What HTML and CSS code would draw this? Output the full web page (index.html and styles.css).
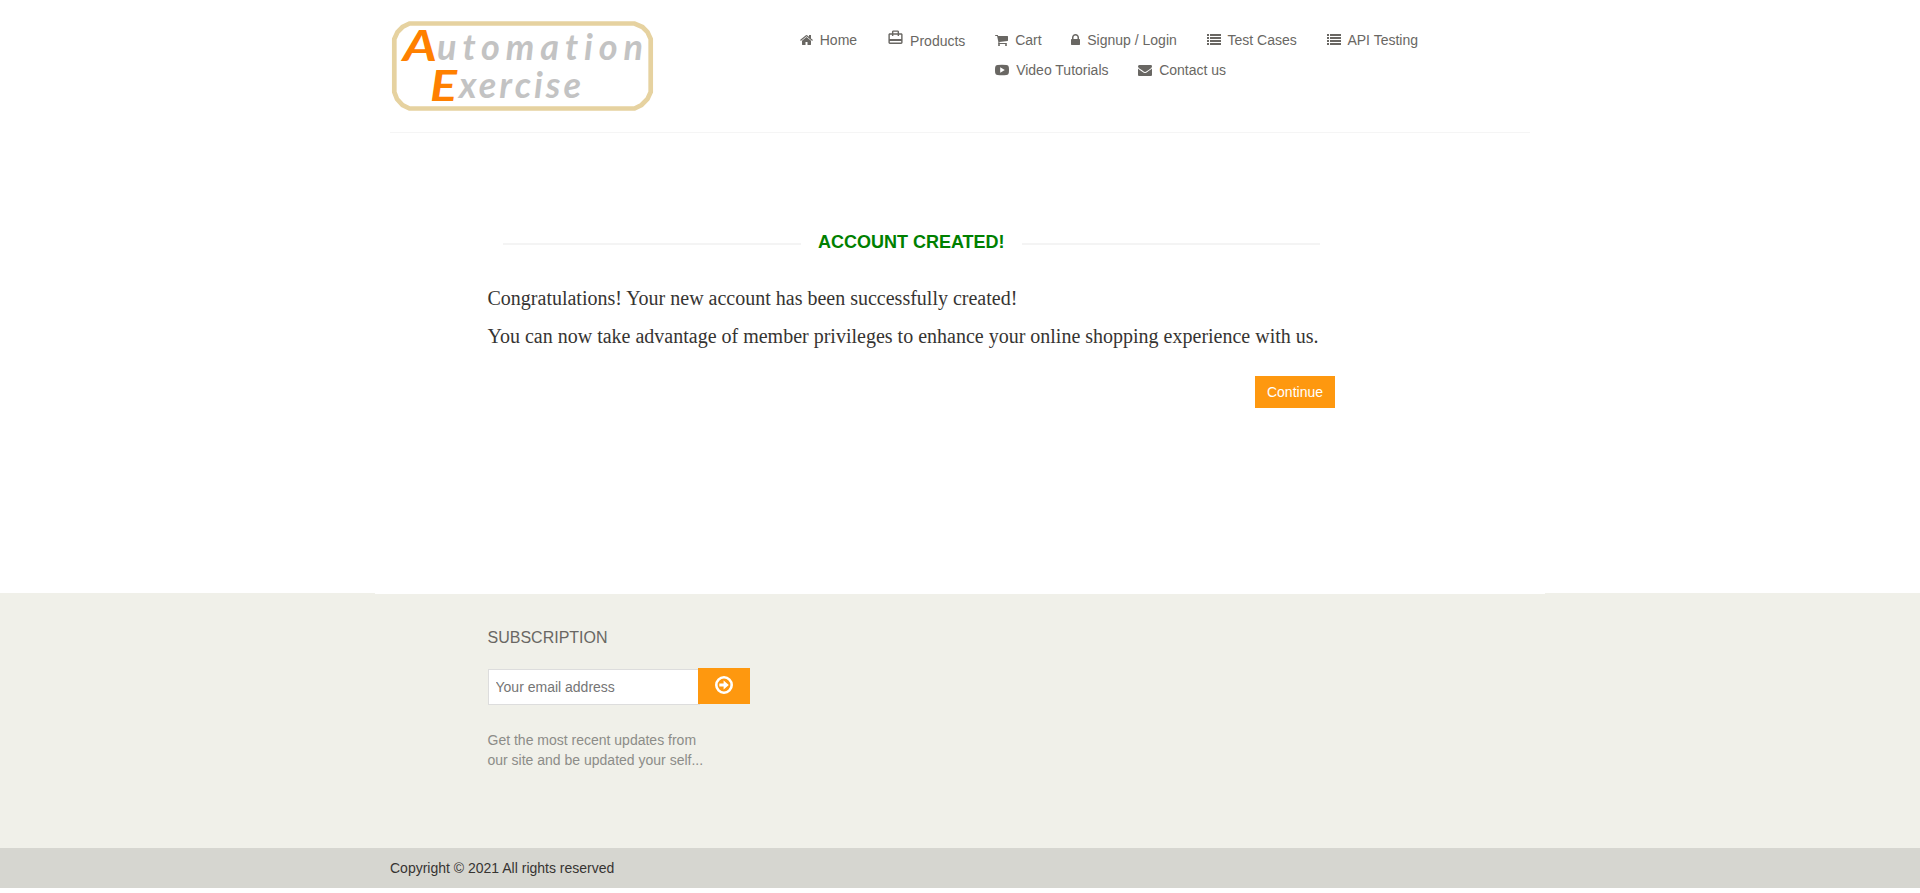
FILE: index.html
```html
<!DOCTYPE html>
<html lang="en">
<head>
<meta charset="utf-8">
<title>Automation Exercise - Account Created</title>
<link rel="stylesheet" href="styles.css">
</head>
<body>
<header class="container header">
  <div class="header-inner">
    <a class="logo">
      <svg width="263" height="90" viewBox="0 0 263 90">
        <path class="logo-frame" d="M18.500 2.500H243.500L251.500 6L256.500 11L259.700 18V71L256.500 78L250.500 84L243.500 87.500H18.500L11.500 84L6 78L3.300 71V18L6.500 11L11.500 6Z"/>
        <g class="logo-text">
          <text class="cap" x="12" y="40" textLength="34" lengthAdjust="spacingAndGlyphs">A</text>
          <text x="46" y="39" textLength="206">utomation</text>
          <text class="cap" x="39" y="80" textLength="27" lengthAdjust="spacingAndGlyphs">E</text>
          <text x="68" y="77" textLength="122">xercise</text>
        </g>
      </svg>
    </a>
    <nav class="nav">
      <a class="nav-item"><svg width="13" height="14" viewBox="64 0 1664 1792"><path d="M1472 992v480q0 26-19 45t-45 19h-384v-384h-256v384h-384q-26 0-45-19t-19-45v-480q0-1 .5-3t.5-3l575-474 575 474q1 2 1 6zm223-69l-62 74q-8 9-21 11h-3q-13 0-21-7l-692-577-692 577q-12 8-24 7-13-2-21-11l-62-74q-8-10-7-23.500t11-21.500l719-599q32-26 76-26t76 26l244 204v-195q0-14 9-23t23-9h192q14 0 23 9t9 23v408l219 182q10 8 11 21.500t-7 23.500z"/></svg>Home</a>
      <a class="nav-item nav-products"><svg width="17" height="17" viewBox="0 0 24 24"><path d="M20 6h-3V4c0-1.110-.89-2-2-2H9c-1.110 0-2 .89-2 2v2H4c-1.110 0-2 .89-2 2v11c0 1.110.89 2 2 2h16c1.110 0 2-.89 2-2V8c0-1.110-.89-2-2-2zM9 4h6v2H9V4zm11 15H4v-2h16v2zm0-5H4V8h3v2h2V8h6v2h2V8h3v6z"/></svg>Products</a>
      <div class="nav-group">
        <div class="nav-row">
          <a class="nav-item"><svg width="13" height="14" viewBox="64 0 1664 1792"><path d="M704 1536q0 52-38 90t-90 38-90-38-38-90 38-90 90-38 90 38 38 90zm896 0q0 52-38 90t-90 38-90-38-38-90 38-90 90-38 90 38 38 90zm128-1088v512q0 24-16.500 42.500t-40.500 21.500l-1044 122q13 60 13 70 0 16-24 64h920q26 0 45 19t19 45-19 45-45 19h-1024q-26 0-45-19t-19-45q0-11 8-31.500t16-36 21.500-40 15.500-29.500l-177-823h-204q-26 0-45-19t-19-45 19-45 45-19h256q16 0 28.500 6.500t19.500 15.500 13 24.500 8 26 5.500 29.500 4.500 26h1201q26 0 45 19t19 45z"/></svg>Cart</a>
          <a class="nav-item"><svg width="9" height="14" viewBox="320 0 1152 1792"><path d="M640 768h512v-192q0-106-75-181t-181-75-181 75-75 181v192zm832 96v576q0 40-28 68t-68 28h-960q-40 0-68-28t-28-68v-576q0-40 28-68t68-28h32v-192q0-184 132-316t316-132 316 132 132 316v192h32q40 0 68 28t28 68z"/></svg>Signup / Login</a>
          <a class="nav-item"><svg width="14" height="14" viewBox="0 0 14 14"><path d="M0 1h2v2H0zM3 1h11v2H3zM0 4h2v2H0zM3 4h11v2H3zM0 7h2v2H0zM3 7h11v2H3zM0 10h2v2H0zM3 10h11v2H3z"/></svg>Test Cases</a>
          <a class="nav-item"><svg width="14" height="14" viewBox="0 0 14 14"><path d="M0 1h2v2H0zM3 1h11v2H3zM0 4h2v2H0zM3 4h11v2H3zM0 7h2v2H0zM3 7h11v2H3zM0 10h2v2H0zM3 10h11v2H3z"/></svg>API Testing</a>
        </div>
        <div class="nav-row">
          <a class="nav-item"><svg width="14" height="14" viewBox="0 0 14 14"><path fill-rule="evenodd" d="M2.500 2Q7 1.600 11.500 2Q13.500 2.100 13.800 4Q14.200 7 13.800 10Q13.500 11.800 11.500 12Q7 12.400 2.500 12Q.5 11.800 .2 10Q-.2 7 .2 4Q.5 2.100 2.500 2ZM5.200 4.200V9.800L9.800 7Z"/></svg>Video Tutorials</a>
          <a class="nav-item"><svg width="14" height="14" viewBox="0 0 1792 1792"><path d="M1792 710v794q0 66-47 113t-113 47h-1472q-66 0-113-47t-47-113v-794q44 49 101 87 362 246 497 345 57 42 92.500 65.500t94.500 48 110 24.500h2q51 0 110-24.500t94.500-48 92.500-65.500q170-123 498-345 57-39 100-87zm0-294q0 79-49 151t-122 123q-376 261-468 325-10 7-42.500 31t-54 38.500-52 32.500-57.500 27-50 9h-2q-23 0-50-9t-57.500-27-52-32.500-54-38.500-42.500-31q-91-64-262-182.500t-205-142.500q-62-42-117-115.500t-55-136.500q0-78 41.500-130t118.500-52h1472q65 0 112.500 47t47.500 113z"/></svg>Contact us</a>
        </div>
      </div>
    </nav>
  </div>
</header>

<main class="container main">
  <section class="account">
    <h2 class="title">Account Created!</h2>
    <p class="message">Congratulations! Your new account has been successfully created!</p>
    <p class="message">You can now take advantage of member privileges to enhance your online shopping experience with us.</p>
    <div class="actions"><a class="continue">Continue</a></div>
  </section>
</main>

<footer class="footer">
  <div class="container footer-cap"></div>
  <div class="container">
    <div class="subscribe">
      <h2 class="subscribe-title">Subscription</h2>
      <form class="subscribe-form">
        <input class="subscribe-input" type="email" placeholder="Your email address">
        <button class="subscribe-button" type="button" aria-label="Subscribe">
          <svg width="18" height="18" viewBox="0 0 18 18"><circle cx="9" cy="9" r="7.700" fill="none" stroke="currentColor" stroke-width="2.600"/><path d="M4.300 7.400H8.600V4.400L13.800 9L8.600 13.600V10.600H4.300Z"/></svg>
        </button>
      </form>
      <p class="subscribe-note">Get the most recent updates from<br>our site and be updated your self...</p>
    </div>
  </div>
  <div class="footer-bottom">
    <div class="container"><p class="copyright">Copyright © 2021 All rights reserved</p></div>
  </div>
</footer>
</body>
</html>
```

FILE: styles.css
```css
* { box-sizing: border-box; }

body {
  margin: 0;
  background: #fff;
  color: #363432;
  font: 14px/20px "Liberation Sans", Arial, sans-serif;
}

h2, p { margin: 0; }
svg { display: block; fill: currentColor; flex: none; }

.container {
  width: 1170px;
  margin: 0 auto;
  padding: 0 15px;
}

/* Header */
.header-inner {
  display: flex;
  justify-content: space-between;
  height: 133px;
  padding: 21px 112px 0 1px;
  border-bottom: 1px solid #f5f5f5;
}

.logo-frame { fill: #fff; stroke: #e6d2a0; stroke-width: 4.700; }
.logo-text {
  font: italic 700 36px "Lato", sans-serif;
  font-variant-ligatures: none;
  fill: #c3c3c3;
}
.logo-text .cap { font-size: 42px; fill: #ff8000; }

.nav {
  display: flex;
  align-items: flex-start;
  gap: 30px;
  padding-top: 9px;
  color: #696763;
}
.nav-group { display: flex; flex-direction: column; gap: 10px; }
.nav-row { display: flex; gap: 29.900px; }
.nav-item {
  display: flex;
  align-items: center;
  gap: 6.800px;
  white-space: nowrap;
}
.nav-products { gap: 6px; padding-top: 1px; }
.nav-products svg { margin-top: -7px; }

/* Confirmation */
.main { height: 460px; }
.account {
  width: 847.500px;
  margin-left: 97.500px;
  padding-top: 99px;
}
.title {
  display: flex;
  align-items: center;
  gap: 17px;
  margin: 0 15px 32px;
  color: green;
  font-size: 18px;
  line-height: 20px;
  text-transform: uppercase;
}
.title::before,
.title::after {
  content: "";
  flex: 1;
  height: 2px;
  margin-top: 4px;
  background: #f4f4f4;
}
.message {
  margin-bottom: 10px;
  font: 20px/28px "Liberation Serif", "Times New Roman", serif;
  white-space: nowrap;
}
.actions { display: flex; justify-content: flex-end; padding-top: 16px; }
.continue {
  padding: 6px 12px;
  background: #fe980f;
  color: #fff;
}

/* Footer */
.footer { background: #f0f0e9; }
.footer-cap { height: 1px; background: #fff; }
.subscribe {
  height: 254px;
  margin-left: 97.500px;
  padding-top: 34px;
}
.subscribe-title {
  margin-bottom: 20px;
  color: #696763;
  font-size: 16px;
  font-weight: 400;
  text-transform: uppercase;
}
.subscribe-form { display: flex; align-items: flex-start; }
.subscribe-input {
  width: 212px;
  height: 36px;
  margin: 1px -2px 0 0;
  padding: 0 7px 1px;
  border: 1px solid #ddd;
  background: #fff;
  font: inherit;
}
.subscribe-input::placeholder { color: #757575; }
.subscribe-button {
  display: flex;
  justify-content: center;
  width: 52px;
  height: 36px;
  padding: 8px 0 0;
  border: 0;
  background: #fe980f;
  color: #fff;
  z-index: 1;
}
.subscribe-note { margin-top: 25px; color: #8c8c88; }
.footer-bottom { background: #d6d6d0; padding: 10px 0; }
```
